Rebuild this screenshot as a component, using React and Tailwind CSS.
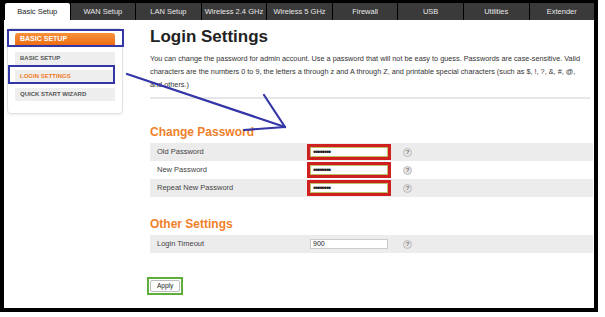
const tabs = [
  "Basic Setup",
  "WAN Setup",
  "LAN Setup",
  "Wireless 2.4 GHz",
  "Wireless 5 GHz",
  "Firewall",
  "USB",
  "Utilities",
  "Extender",
];

const HelpIcon = () => (
  <span className="ml-[12px] flex h-[9px] w-[9px] items-center justify-center rounded-full border border-[#bbb] bg-[#e4e4e4] text-[6px] font-bold leading-none text-[#777]">
    ?
  </span>
);

const Row = ({ label, value, gray, marked, password }) => (
  <div
    className={`flex h-[18px] items-center ${gray ? "bg-[#ececec]" : "bg-white"}`}
  >
    <span className="w-[157px] pl-[7px] text-[7.5px] text-[#444]">{label}</span>
    <div
      className={`flex h-[16px] w-[84px] items-center ${marked ? "border-[3px] border-[#d01f1f]" : "border-[3px] border-transparent"}`}
    >
      <div
        className={`flex h-full w-full items-center bg-white pl-[2px] text-[#222] ${marked ? "border border-[#b8c46a]" : "border border-[#ccc]"} ${password ? "text-[9px] leading-none tracking-[-1px]" : "text-[7px]"}`}
      >
        {value}
      </div>
    </div>
    <HelpIcon />
  </div>
);

export default function App() {
  return (
    <div className="relative h-[317px] w-[605px] bg-white font-['Liberation_Sans',Arial,sans-serif]">
      <div className="flex h-[312px] w-[598px] flex-col bg-black pb-[4px] pl-[4px] pr-[4px] pt-[3px]">
        {/* Tabs */}
        <div className="flex h-[17px] gap-[1px] pl-[1px]">
          {tabs.map((t, i) => (
            <div
              key={t}
              className={`flex flex-1 items-center justify-center text-[7.5px] ${
                i === 0
                  ? "rounded-t-[2px] bg-white text-[#222]"
                  : "bg-[#3a3a3a] text-[#e8e8e8]"
              }`}
            >
              {t}
            </div>
          ))}
        </div>

        {/* Content */}
        <div className="flex flex-1 bg-white">
          {/* Sidebar */}
          <div className="ml-[3px] mt-[8px] h-[86px] w-[116px] rounded-[4px] border border-[#e2e2e2] px-[7px] pt-[4px] shadow-[0_1px_2px_rgba(0,0,0,0.08)]">
            <div className="flex h-[12px] items-center rounded-t-[3px] bg-gradient-to-b from-[#f7913a] to-[#ec6d12] pl-[5px] text-[7px] font-bold text-white">
              BASIC SETUP
            </div>
            <div className="mt-[7px] flex h-[13px] items-center bg-[#eeeeee] pl-[5px] text-[6px] font-bold text-[#555]">
              BASIC SETUP
            </div>
            <div className="mt-[5px] flex h-[13px] items-center bg-[#eeeeee] pl-[5px] text-[6px] font-bold text-[#f07b22]">
              LOGIN SETTINGS
            </div>
            <div className="mt-[5px] flex h-[13px] items-center bg-[#eeeeee] pl-[5px] text-[6px] font-bold text-[#555]">
              QUICK START WIZARD
            </div>
          </div>

          {/* Main */}
          <div className="ml-[27px] w-[443px]">
            <h1 className="mt-[7px] text-[17px] font-bold leading-[20px] text-[#222]">
              Login Settings
            </h1>
            <p className="mt-[5px] w-[436px] text-[7.3px] leading-[13px] text-[#333]">
              You can change the password for admin account. Use a password that
              will not be easy to guess. Passwords are case-sensitive. Valid
              characters are the numbers 0 to 9, the letters a through z and A
              through Z, and printable special characters (such as $, !, ?, &amp;,
              #, @, and others.)
            </p>
            <div className="mt-[6px] h-[2px] w-[440px] bg-[#e6e6e6]" />

            <h2 className="mt-[26px] text-[12px] font-bold leading-[14px] text-[#f0812a]">
              Change Password
            </h2>
            <div className="mt-[4px]">
              <Row label="Old Password" value="••••••••" gray marked password />
              <Row label="New Password" value="••••••••" marked password />
              <Row label="Repeat New Password" value="••••••••" gray marked password />
            </div>

            <h2 className="mt-[20px] text-[12px] font-bold leading-[14px] text-[#f0812a]">
              Other Settings
            </h2>
            <div className="mt-[4px]">
              <Row label="Login Timeout" value="900" gray />
            </div>

            <div className="ml-[-3px] mt-[24px] inline-flex border-[2px] border-[#5fae3c] p-[1px]">
              <button className="h-[12px] rounded-[2px] border border-[#bdbdbd] bg-white px-[6px] text-[6.5px] leading-none text-[#222]">
                Apply
              </button>
            </div>
          </div>
        </div>
      </div>

      {/* Annotations */}
      <div className="absolute left-[7px] top-[29px] h-[18px] w-[117px] border-[2px] border-[#3236a6]" />
      <div className="absolute left-[8px] top-[65px] h-[19px] w-[107px] border-[2px] border-[#3236a6]" />
      <svg
        className="absolute left-0 top-0"
        width="605"
        height="317"
        viewBox="0 0 605 317"
        fill="none"
      >
        <g stroke="#3236a6" strokeWidth="2.2" strokeLinecap="round">
          <line x1="127" y1="74" x2="285" y2="127" />
          <line x1="264" y1="95" x2="285" y2="127" />
          <line x1="244" y1="130" x2="285" y2="127" />
        </g>
      </svg>
    </div>
  );
}
